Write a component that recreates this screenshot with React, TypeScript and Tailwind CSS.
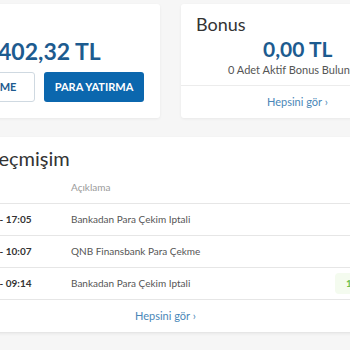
import React from "react";

const font = { fontFamily: "Lato, 'Noto Sans', sans-serif" };

function Row({ time, desc, amount }: { time: string; desc: string; amount?: string }) {
  return (
    <div className="flex h-[32px] items-center border-b border-[#e6e6e6]">
      <div className="w-[131px] shrink-0 whitespace-nowrap pl-[6px] text-[10px] font-bold text-[#333]">{time}</div>
      <div className="w-[264px] shrink-0 whitespace-nowrap text-[10px] text-[#555]">{desc}</div>
      {amount ? (
        <div className="whitespace-nowrap rounded-sm bg-[#f4fbef] px-[11px] py-[3px] text-[10px] font-bold text-[#6cc04a]">
          {amount}
        </div>
      ) : null}
    </div>
  );
}

export default function App() {
  return (
    <div
      className="relative h-[350px] w-[350px] overflow-hidden bg-[#f6f6f6]"
      style={font}
    >
      <div className="ml-[-60px] flex w-[560px] flex-col pt-[4px]">
        <div className="flex gap-[21px]">
          {/* Wallet card */}
          <div className="flex h-[114px] w-[220px] flex-col rounded-[3px] bg-white px-[14px] pt-[32px] shadow-[0_1px_3px_rgba(0,0,0,0.06)]">
            <div className="ml-[44px] whitespace-nowrap text-[23px] font-bold leading-[30px] text-[#1d5b8f]">
              402,32 TL
            </div>
            <div className="mt-[6px] flex gap-[9px]">
              <button className="flex h-[30px] w-[81px] items-center justify-center rounded-[3px] border border-[#cfd9e1] bg-white pl-[6px] text-[11px] font-bold text-[#1d5b8f]">
                ÇEKME
              </button>
              <button className="flex h-[30px] w-[100px] items-center justify-center rounded-[3px] bg-[#0b67ae] text-[11px] font-bold text-white">
                PARA YATIRMA
              </button>
            </div>
          </div>
          {/* Bonus card */}
          <div className="flex h-[114px] w-[240px] flex-col rounded-[3px] bg-white pt-[8px] shadow-[0_1px_3px_rgba(0,0,0,0.06)]">
            <div className="ml-[15px] text-[18px] leading-[24px] text-[#333]">Bonus</div>
            <div className="ml-[82px] mt-[1px] text-[21px] font-bold leading-[24px] text-[#1d5b8f]">
              0,00 TL
            </div>
            <div className="ml-[47px] mt-[1px] whitespace-nowrap text-[11px] leading-[16px] text-[#555]">
              0 Adet Aktif Bonus Bulunmaktadır
            </div>
            <div className="mt-[7px] flex flex-1 items-center border-t border-[#ececec]">
              <span className="ml-[86px] text-[11px] text-[#4a87b8]">Hepsini gör ›</span>
            </div>
          </div>
        </div>

        {/* History card */}
        <div className="mt-[19px] flex h-[196px] w-[520px] flex-col rounded-[3px] bg-white pt-[7px] shadow-[0_1px_3px_rgba(0,0,0,0.06)]">
          <div className="ml-[44px] text-[20px] leading-[28px] text-[#333]">Geçmişim</div>
          <div className="flex h-[32px] items-center border-b border-[#e6e6e6]">
            <div className="w-[131px] shrink-0" />
            <div className="text-[10px] text-[#9a9a9a]">Açıklama</div>
          </div>
          <div className="flex flex-col">
            <Row time="11.03.2024 - 17:05" desc="Bankadan Para Çekim Iptali" />
            <Row time="11.03.2024 - 10:07" desc="QNB Finansbank Para Çekme" />
            <Row time="20.02.2024 - 09:14" desc="Bankadan Para Çekim Iptali" amount="1.000,00 TL" />
          </div>
          <div className="flex flex-1 items-center border-b border-[#e6e6e6]">
            <span className="ml-[195px] text-[11px] text-[#4a87b8]">Hepsini gör ›</span>
          </div>
        </div>
      </div>
    </div>
  );
}
